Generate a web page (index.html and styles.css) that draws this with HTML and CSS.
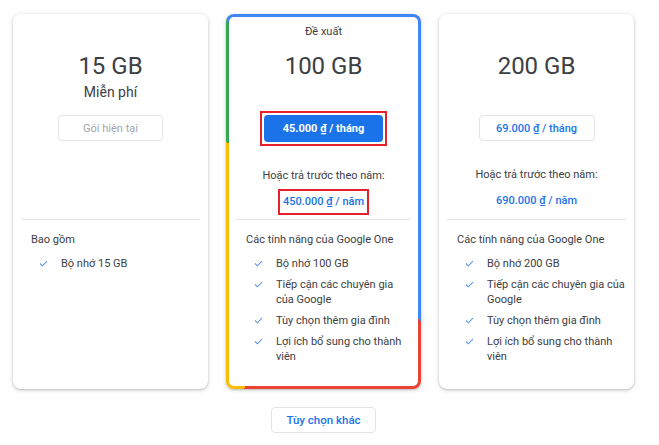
FILE: index.html
```html
<!DOCTYPE html>
<html lang="vi">
<head>
<meta charset="utf-8">
<title>Google One</title>
<link rel="stylesheet" href="styles.css">
</head>
<body>
<main class="page">
  <div class="plans">
    <section class="card">
      <div class="head">
        <div class="label"></div>
        <div class="size">15 GB</div>
        <div class="sub">Miễn phí</div>
        <button class="btn btn--current">Gói hiện tại</button>
      </div>
      <div class="divider"></div>
      <div class="features">
        <div class="feat-title">Bao gồm</div>
        <ul class="feat-list">
          <li><svg class="check" viewBox="0 0 10 8"><polyline points="1,4 3.7,6.6 9,1.2"/></svg><span class="feat-text">Bộ nhớ 15 GB</span></li>
        </ul>
      </div>
    </section>

    <section class="card card--featured">
      <div class="head">
        <div class="label">Đề xuất</div>
        <div class="size">100 GB</div>
        <div class="sub"></div>
        <span class="mark"><button class="btn btn--primary">45.000 ₫ / tháng</button></span>
        <div class="annual">Hoặc trả trước theo năm:</div>
        <a class="price price--marked">450.000 ₫ / năm</a>
      </div>
      <div class="divider"></div>
      <div class="features">
        <div class="feat-title">Các tính năng của Google One</div>
        <ul class="feat-list">
          <li><svg class="check" viewBox="0 0 10 8"><polyline points="1,4 3.7,6.6 9,1.2"/></svg><span class="feat-text">Bộ nhớ 100 GB</span></li>
          <li><svg class="check" viewBox="0 0 10 8"><polyline points="1,4 3.7,6.6 9,1.2"/></svg><span class="feat-text">Tiếp cận các chuyên gia<br>của Google</span></li>
          <li><svg class="check" viewBox="0 0 10 8"><polyline points="1,4 3.7,6.6 9,1.2"/></svg><span class="feat-text">Tùy chọn thêm gia đình</span></li>
          <li><svg class="check" viewBox="0 0 10 8"><polyline points="1,4 3.7,6.6 9,1.2"/></svg><span class="feat-text">Lợi ích bổ sung cho thành<br>viên</span></li>
        </ul>
      </div>
    </section>

    <section class="card">
      <div class="head">
        <div class="label"></div>
        <div class="size">200 GB</div>
        <div class="sub"></div>
        <span class="mark mark--none"><button class="btn btn--outline">69.000 ₫ / tháng</button></span>
        <div class="annual">Hoặc trả trước theo năm:</div>
        <a class="price">690.000 ₫ / năm</a>
      </div>
      <div class="divider"></div>
      <div class="features">
        <div class="feat-title">Các tính năng của Google One</div>
        <ul class="feat-list">
          <li><svg class="check" viewBox="0 0 10 8"><polyline points="1,4 3.7,6.6 9,1.2"/></svg><span class="feat-text">Bộ nhớ 200 GB</span></li>
          <li><svg class="check" viewBox="0 0 10 8"><polyline points="1,4 3.7,6.6 9,1.2"/></svg><span class="feat-text">Tiếp cận các chuyên gia của<br>Google</span></li>
          <li><svg class="check" viewBox="0 0 10 8"><polyline points="1,4 3.7,6.6 9,1.2"/></svg><span class="feat-text">Tùy chọn thêm gia đình</span></li>
          <li><svg class="check" viewBox="0 0 10 8"><polyline points="1,4 3.7,6.6 9,1.2"/></svg><span class="feat-text">Lợi ích bổ sung cho thành<br>viên</span></li>
        </ul>
      </div>
    </section>
  </div>
  <button class="btn btn--outline btn--more">Tùy chọn khác</button>
</main>
</body>
</html>
```

FILE: styles.css
```css
* { box-sizing: border-box; }

html, body {
  margin: 0;
  background: #ffffff;
}

body {
  font-family: Roboto, "Noto Sans", Arial, sans-serif;
  color: #3c4043;
}

.page {
  width: 659px;
  padding: 14px 0 0 13px;
  display: flex;
  flex-direction: column;
}

.plans {
  display: flex;
  gap: 18px;
}

.card {
  width: 195px;
  height: 375px;
  border: 3px solid transparent;
  border-radius: 8px;
  padding: 0 5px;
  background: #fff;
  box-shadow: 0 1px 2px rgba(60, 64, 67, 0.25), 0 1px 4px 1px rgba(60, 64, 67, 0.12);
  display: flex;
  flex-direction: column;
}

.card--featured {
  padding: 0 7px;
  background:
    linear-gradient(#fff, #fff) padding-box,
    conic-gradient(from 0deg at 50% 50%,
      #4285f4 0deg 141deg,
      #ea4335 141deg 203deg,
      #fbbc04 203deg 301.5deg,
      #34a853 301.5deg 332deg,
      #4285f4 332deg 360deg) border-box;
}

.head {
  height: 202px;
  display: flex;
  flex-direction: column;
  align-items: center;
}

.label {
  margin-top: 7px;
  height: 16px;
  line-height: 16px;
  font-size: 11px;
  color: #3c4043;
}

.size {
  margin-top: 10px;
  font-size: 24px;
  line-height: 32px;
  color: #3c4043;
}

.sub {
  height: 20px;
  line-height: 20px;
  font-size: 14px;
  color: #3c4043;
}

.mark {
  margin-top: 9px;
  padding: 2px;
  border: 2px solid #e8202a;
  display: flex;
}

.mark--none {
  border-color: transparent;
}

.btn {
  margin-top: 13px;
  height: 26px;
  padding: 0;
  border-radius: 4px;
  font-family: Roboto, "Noto Sans", Arial, sans-serif;
  font-size: 11px;
  font-weight: 500;
  cursor: pointer;
}

.mark .btn {
  margin-top: 0;
}

.btn--current {
  width: 105px;
  background: #fff;
  border: 1px solid #e4e6e9;
  color: #a2a6ab;
  font-weight: 400;
}

.btn--primary {
  width: 119px;
  height: 27px;
  background: #1a73e8;
  border: none;
  color: #fff;
  font-weight: 700;
}

.btn--outline {
  width: 116px;
  background: #fff;
  border: 1px solid #e2e4e7;
  color: #1a73e8;
}

.annual {
  margin-top: 22px;
  font-size: 11px;
  line-height: 16px;
  color: #3c4043;
}

.price {
  margin-top: 5px;
  padding: 3px 3px;
  line-height: 16px;
  border: 2px solid transparent;
  font-size: 11px;
  font-weight: 500;
  color: #1a73e8;
}

.price--marked {
  border-color: #e8202a;
}

.divider {
  height: 1px;
  background: #e3e5e8;
}

.features {
  padding: 12px 0 0 10px;
}

.feat-title {
  font-size: 11px;
  line-height: 16px;
  color: #3c4043;
}

.feat-list {
  list-style: none;
  margin: 8px 0 0;
  padding: 0;
  display: flex;
  flex-direction: column;
  gap: 6px;
}

.feat-list li {
  display: flex;
  align-items: flex-start;
  font-size: 11px;
  line-height: 15px;
  color: #3c4043;
}

.feat-text {
  white-space: nowrap;
}

.check {
  flex: none;
  width: 9px;
  height: 7px;
  margin: 4px 13px 0 8px;
  fill: none;
  stroke: #5b95f0;
  stroke-width: 1.2;
}

.btn--more {
  margin: 18px 0 0 258px;
  width: 105px;
  font-size: 11.5px;
}
```
